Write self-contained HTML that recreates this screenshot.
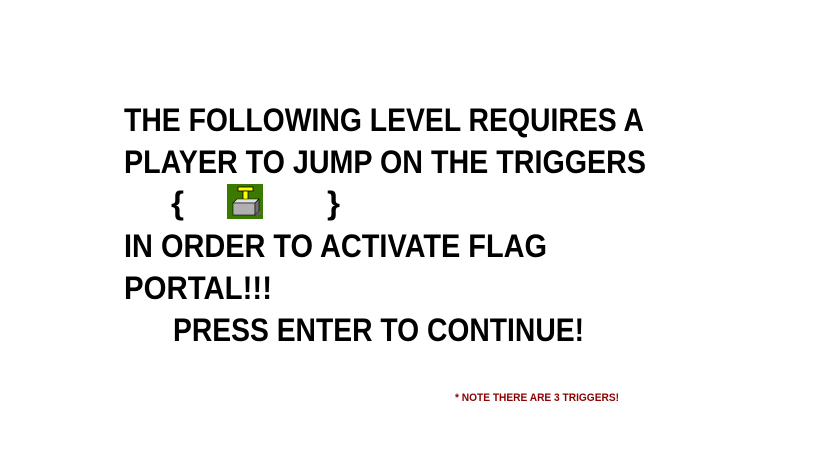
<!DOCTYPE html>
<html><head><meta charset="utf-8"><style>
html,body{margin:0;padding:0;background:#fff;width:819px;height:460px;overflow:hidden}
svg{display:block}
text{font-family:"Liberation Sans",sans-serif;font-weight:bold}
</style></head><body>
<svg width="819" height="460" viewBox="0 0 819 460" xmlns="http://www.w3.org/2000/svg">
<rect width="819" height="460" fill="#fff"/>
<g font-size="32" fill="#000">
<text x="124" y="131" textLength="520" lengthAdjust="spacingAndGlyphs">THE FOLLOWING LEVEL REQUIRES A</text>
<text x="124" y="173" textLength="522" lengthAdjust="spacingAndGlyphs">PLAYER TO JUMP ON THE TRIGGERS</text>
<text x="171" y="214" textLength="13" lengthAdjust="spacingAndGlyphs">{</text>
<text x="327" y="214" textLength="13" lengthAdjust="spacingAndGlyphs">}</text>
<text x="124" y="257" textLength="423" lengthAdjust="spacingAndGlyphs">IN ORDER TO ACTIVATE FLAG</text>
<text x="124" y="299" textLength="148" lengthAdjust="spacingAndGlyphs">PORTAL!!!</text>
<text x="173" y="341" textLength="411" lengthAdjust="spacingAndGlyphs">PRESS ENTER TO CONTINUE!</text>
</g>
<text x="455" y="401" font-size="11" fill="#8b0000" textLength="164" lengthAdjust="spacingAndGlyphs">* NOTE THERE ARE 3 TRIGGERS!</text>
<!-- trigger icon -->
<rect x="227" y="184" width="36" height="35" fill="#3a7a00"/>
<rect x="238" y="187" width="15" height="4" fill="#ffff00" stroke="#000" stroke-width="0.8"/>
<rect x="243" y="191" width="5" height="9" fill="#ffff00" stroke="#000" stroke-width="0.8"/>
<polygon points="233,203 237,199 259,199 255,203" fill="#e0e0e0" stroke="#000" stroke-width="0.6"/>
<rect x="233" y="203" width="22" height="12" fill="#b0b0b0" stroke="#000" stroke-width="0.6"/>
<polygon points="255,203 259,199 259,211 255,215" fill="#707070" stroke="#000" stroke-width="0.6"/>
<polygon points="259,211 263,211 259,215 255,215" fill="#606060"/>
</svg>
</body></html>
